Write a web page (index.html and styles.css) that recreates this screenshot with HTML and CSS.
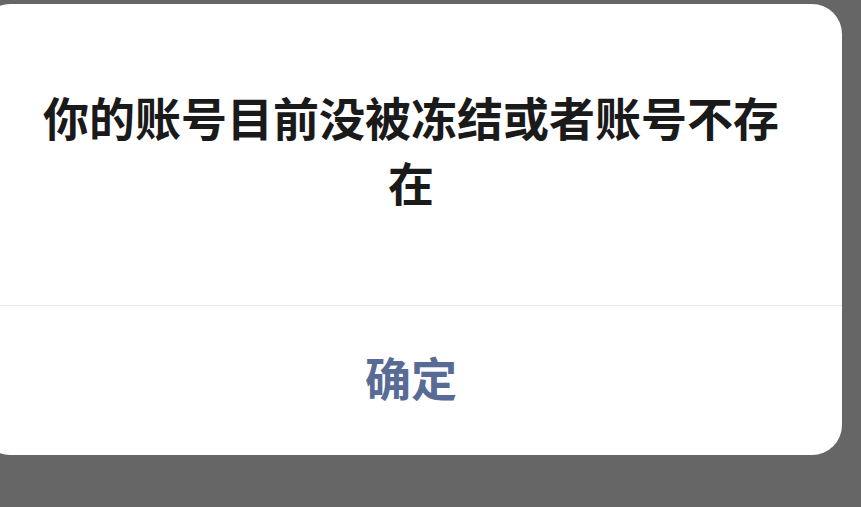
FILE: index.html
```html
<!DOCTYPE html>
<html lang="zh-CN">
<head>
<meta charset="utf-8">
<title>提示</title>
<link rel="stylesheet" href="styles.css">
</head>
<body>
<div class="dialog">
  <div class="dialog-body">你的账号目前没被冻结或者账号不存在</div>
  <div class="dialog-footer">
    <button class="dialog-btn" type="button">确定</button>
  </div>
</div>
</body>
</html>
```
FILE: styles.css
```css
html, body {
  margin: 0;
  padding: 0;
  height: 100%;
}
body {
  background: #666666;
  font-family: "Noto Sans CJK SC", "Noto Sans", sans-serif;
  overflow: hidden;
}
.dialog {
  margin-top: 4px;
  margin-left: -20px;
  width: 862px;
  height: 451px;
  background: #ffffff;
  border-radius: 30px;
  display: flex;
  flex-direction: column;
  overflow: hidden;
}
.dialog-body {
  height: 302px;
  box-sizing: border-box;
  padding: 80px 50px 0;
  text-align: center;
  font-size: 46px;
  line-height: 65px;
  font-weight: 700;
  color: #1a1a1a;
  border-bottom: 1px solid #e6e6e6;
}
.dialog-footer {
  flex: 1;
  display: flex;
}
.dialog-btn {
  flex: 1;
  border: 0;
  background: transparent;
  padding: 0 0 10px;
  font-family: inherit;
  font-size: 46px;
  font-weight: 700;
  color: #576b95;
}
```
